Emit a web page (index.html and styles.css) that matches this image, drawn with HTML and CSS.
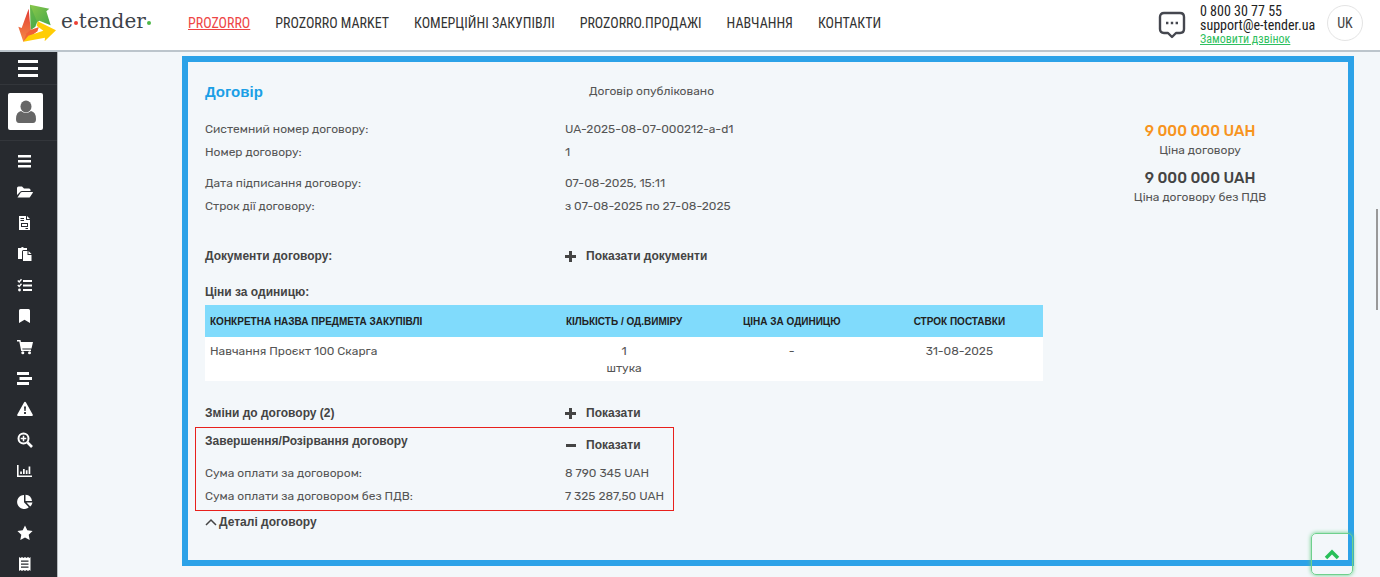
FILE: index.html
```html
<!DOCTYPE html>
<html lang="uk">
<head>
    <meta charset="UTF-8">
    <meta name="viewport" content="width=device-width, initial-scale=1.0">
    <title>e-tender</title>
    <link rel="stylesheet" href="styles.css">
</head>
<body>
    <header class="header">
        <a href="#" class="logo">
            <svg class="logo-mark" viewBox="54 12 114 114">
                <defs>
                    <linearGradient id="red" x1="0" y1="0" x2="0" y2="1"><stop offset="0" stop-color="#e23a35"/><stop offset="1" stop-color="#f58a45"/></linearGradient>
                    <linearGradient id="green" x1="0" y1="0" x2="1" y2="1"><stop offset="0" stop-color="#8cc84b"/><stop offset="1" stop-color="#3fa548"/></linearGradient>
                </defs>
                <path fill="url(#green)" d="m90 14 58 12-9 8 13 42-34-14-8 6-4 12-14 10z"/>
                <path fill="#2f9e49" d="m90 14 18 44 4 10-6 12-14 10z" opacity=".35"/>
                <path fill="url(#red)" d="m86 26 6 64 24-8-4 12-42 31-15-45 10 4z"/>
                <path fill="#f0562f" d="m92 90 24-8-4 12-42 31 10-25z" opacity=".6"/>
                <path fill="#ffcd05" d="m113 64 55 27-34 33 1-11-65 12 15-18 45-15-20-15z"/>
            </svg>
            <span class="logo-text">e<i class="dot dot-red"></i>tender<i class="dot dot-green"></i></span>
        </a>
        <nav class="nav">
            <a href="#" class="active">PROZORRO</a>
            <a href="#">PROZORRO MARKET</a>
            <a href="#">КОМЕРЦІЙНІ ЗАКУПІВЛІ</a>
            <a href="#">PROZORRO.ПРОДАЖІ</a>
            <a href="#">НАВЧАННЯ</a>
            <a href="#">КОНТАКТИ</a>
        </nav>
        <svg class="chat" viewBox="0 0 28 28" fill="none" stroke="#45474f" stroke-width="2.4" stroke-linejoin="round">
            <path d="M6 2h16q4 0 4 4v12q0 4-4 4h-4l-4 4-4-4H6q-4 0-4-4V6q0-4 4-4z"/>
            <path d="M8 12h2.400M12.800 12h2.400M17.600 12H20"/>
        </svg>
        <div class="contacts">
            <span>0 800 30 77 55</span>
            <span>support@e-tender.ua</span>
            <a href="#">Замовити дзвінок</a>
        </div>
        <button class="lang">UK</button>
    </header>

    <div class="page">
        <aside class="sidebar">
            <button class="menu-toggle" aria-label="Меню">
                <svg viewBox="0 0 20 18"><path d="M0 1h20v3H0zM0 8h20v3H0zM0 15h20v3H0z"/></svg>
            </button>
            <div class="user">
                <a href="#" class="avatar" aria-label="Профіль">
                    <svg viewBox="0 0 20 24"><ellipse cx="10" cy="6.500" rx="5.500" ry="6"/><path d="M5 11q5 4 10 0 5 1 5 8 0 4-3 4H3q-3 0-3-4 0-7 5-8z"/></svg>
                </a>
            </div>
            <nav class="side-nav">
                <a href="#" aria-label="Список"><svg viewBox="0 0 16 16"><path d="M1 2h13v2.500H1zM1 7h13v2.500H1zM1 12h13v2.500H1z"/></svg></a>
                <a href="#" aria-label="Папка"><svg viewBox="0 0 16 16"><path d="M0 11V4q0-1.500 1.500-1.500H5L7 4.500h5q1.500 0 1.500 1.500v1H5Q3.600 7 3 8z"/><path d="M.5 13.500 3.800 8.500Q4.200 8 5 8h10.500q.8 0 .3.800L13 13q-.4.500-1 .5z"/></svg></a>
                <a href="#" aria-label="Документ"><svg viewBox="0 0 16 16"><path fill-rule="evenodd" d="M2 1h7v4h4v10H2zM3.500 3v1H7V3zM3.500 5v1H7V5zM4 8v4h7V8zm1 1h5v2H5zM8.500 13v1H11v-1z"/><path d="m10 1 3 3h-3z"/></svg></a>
                <a href="#" aria-label="Копії"><svg viewBox="0 0 16 16"><path d="M1 2h3q1-2 3 0h3v2H6.500Q5 4 5 5.500V13H1z"/><path d="M6 5h4.500v4h4v6H6z"/><path d="m11.500 5 3 3h-3z"/></svg></a>
                <a href="#" aria-label="Завдання"><svg viewBox="0 0 16 16"><path d="M6 3h9v2H6zM6 7.500h9v2H6zM6 12h9v2H6z"/><path d="m.8 3.500 1.400 1.400L4.500 2.300M.8 8l1.400 1.400 2.300-2.600" fill="none" stroke="#fff" stroke-width="1.400"/><circle cx="2.500" cy="13" r="1.400"/></svg></a>
                <a href="#" aria-label="Закладка"><svg viewBox="0 0 16 16"><path d="M2 2.500Q2 1 3.500 1h8Q13 1 13 2.500V15l-5.500-3.300L2 15z"/></svg></a>
                <a href="#" aria-label="Кошик"><svg viewBox="0 0 16 16"><path d="M0 1h3.500l.4 2H16l-1.500 6.500H5.300l.2 1H14V12H4.200L2.300 2.500H0z"/><circle cx="5.800" cy="13.800" r="1.500"/><circle cx="12.500" cy="13.800" r="1.500"/></svg></a>
                <a href="#" aria-label="План"><svg viewBox="0 0 16 16"><path d="M0 2h12v3H0zM2.500 7H15v3H2.500zM0 12h12v3H0z"/></svg></a>
                <a href="#" aria-label="Попередження"><svg viewBox="0 0 16 16"><path fill-rule="evenodd" d="M8 .8q.6 0 1 .7l6.700 12q.6 1.500-1 1.500H1.300q-1.600 0-1-1.500L7 1.500Q7.400.8 8 .8zM7 5.500l.4 4.500h1.200L9 5.500zm.1 5.600v1.800h1.800v-1.800z"/></svg></a>
                <a href="#" aria-label="Пошук"><svg viewBox="0 0 16 16" fill="none" stroke="#fff"><circle cx="6.500" cy="6.500" r="5" stroke-width="2"/><path d="m10.500 10.500 4.500 4.500" stroke-width="2.600"/><path d="M3.700 6.500h5.600M6.500 3.700v5.600" stroke-width="1.500"/></svg></a>
                <a href="#" aria-label="Звіти"><svg viewBox="0 0 16 16"><path d="M0 2h1.600v10.400H15V14H0zM3.200 8.500h1.700V11H3.200zM6 6h1.700v5H6zM8.800 7.200h1.700V11H8.800zM11.600 3.500h1.700V11h-1.700z"/></svg></a>
                <a href="#" aria-label="Статистика"><svg viewBox="0 0 16 16"><path d="M7 1v7.200l4.800 5A7 7 0 1 1 7 1z"/><path d="M8.500.8A7 7 0 0 1 15 7H8.500z"/><path d="M9.500 8.500H15.500a7 7 0 0 1-2.300 4z"/></svg></a>
                <a href="#" aria-label="Обране"><svg viewBox="0 0 16 16"><path d="m8 .5 2.300 4.800 5.300.7-3.900 3.700 1 5.300L8 12.400 3.300 15l1-5.300L.4 6l5.300-.7z"/></svg></a>
                <a href="#" aria-label="Рахунки"><svg viewBox="0 0 16 16"><path fill-rule="evenodd" d="m2 1 1.500 1L5 1l1.500 1L8 1l1.500 1L11 1l1.500 1L13.500 1v14l-1-1-1.500 1-1.500-1L8 15l-1.500-1L5 15l-1.500-1L2 15zM4 4.500v1.200h7.500V4.500zm0 3v1.200h7.500V7.500zm0 3v1.200h7.500v-1.200z"/></svg></a>
            </nav>
        </aside>

        <main class="content">
            <section class="contract">
                <div class="details">
                    <div class="row title-row">
                        <h2>Договір</h2>
                        <span class="status">Договір опубліковано</span>
                    </div>
                    <div class="group">
                        <div class="row"><span>Системний номер договору:</span><span>UA-2025-08-07-000212-a-d1</span></div>
                        <div class="row"><span>Номер договору:</span><span>1</span></div>
                    </div>
                    <div class="group">
                        <div class="row"><span>Дата підписання договору:</span><span>07-08-2025, 15:11</span></div>
                        <div class="row"><span>Строк дії договору:</span><span>з 07-08-2025 по 27-08-2025</span></div>
                    </div>
                    <div class="row documents">
                        <h3>Документи договору:</h3>
                        <button class="toggle"><svg viewBox="0 0 12 12"><path d="M4 0h3v4h4v3H7v4H4V7H0V4h4z"/></svg>Показати документи</button>
                    </div>
                    <h3 class="table-title">Ціни за одиницю:</h3>
                    <table class="prices">
                        <thead>
                            <tr>
                                <th class="name">КОНКРЕТНА НАЗВА ПРЕДМЕТА ЗАКУПІВЛІ</th>
                                <th>КІЛЬКІСТЬ / ОД.ВИМІРУ</th>
                                <th>ЦІНА ЗА ОДИНИЦЮ</th>
                                <th>СТРОК ПОСТАВКИ</th>
                            </tr>
                        </thead>
                        <tbody>
                            <tr>
                                <td class="name">Навчання Проєкт 100 Скарга</td>
                                <td>1<br>штука</td>
                                <td>-</td>
                                <td>31-08-2025</td>
                            </tr>
                        </tbody>
                    </table>
                    <div class="row changes">
                        <h3>Зміни до договору (2)</h3>
                        <button class="toggle"><svg viewBox="0 0 12 12"><path d="M4 0h3v4h4v3H7v4H4V7H0V4h4z"/></svg>Показати</button>
                    </div>
                    <div class="completion">
                        <div class="row completion-head">
                            <h3>Завершення/Розірвання договору</h3>
                            <button class="toggle"><svg viewBox="0 0 12 12"><path d="M1 4h10v3H1z"/></svg>Показати</button>
                        </div>
                        <div class="row"><span>Сума оплати за договором:</span><span>8 790 345 UAH</span></div>
                        <div class="row"><span>Сума оплати за договором без ПДВ:</span><span>7 325 287,50 UAH</span></div>
                    </div>
                    <button class="more"><svg viewBox="0 0 12 12"><path d="m1 9 5-5 5 5" fill="none" stroke="#444" stroke-width="1.500"/></svg>Деталі договору</button>
                </div>
                <div class="sums">
                    <strong class="sum orange">9 000 000 UAH</strong>
                    <span>Ціна договору</span>
                    <strong class="sum">9 000 000 UAH</strong>
                    <span>Ціна договору без ПДВ</span>
                </div>
            </section>
        </main>
    </div>

    <button class="to-top" aria-label="Вгору">
        <svg viewBox="0 0 16 12"><path d="m2 10 6-6 6 6" fill="none" stroke="#28bf58" stroke-width="3.500"/></svg>
    </button>
    <div class="scroll-thumb"></div>
</body>
</html>
```
FILE: styles.css
```css
* {
    box-sizing: border-box;
}
body {
    margin: 0;
    height: 100vh;
    overflow: hidden;
    display: flex;
    flex-direction: column;
    background-color: #f3f7fa;
    color: #555;
    font-family: Rubik, Roboto, sans-serif;
    font-size: 12px;
}
a {
    color: inherit;
    text-decoration: none;
}
button {
    padding: 0;
    border: none;
    background: none;
    color: inherit;
    font: inherit;
    cursor: pointer;
}
h2, h3 {
    margin: 0;
}

/* Header */
.header {
    flex: none;
    display: flex;
    align-items: center;
    height: 52px;
    padding: 0 17px 4px 18px;
    background-color: #fff;
    border-bottom: 2px solid #bcc5cc;
    font-family: "Roboto Condensed", Roboto, sans-serif;
}
.logo {
    display: flex;
    align-items: center;
    gap: 5px;
    width: 170px;
}
.logo-mark {
    width: 38px;
    height: 38px;
}
.logo-text {
    display: flex;
    align-items: center;
    padding-bottom: 4px;
    color: #3d434a;
    font-family: "DejaVu Serif", serif;
    font-size: 20px;
    line-height: 28px;
}
.dot {
    width: 4px;
    height: 4px;
    margin: 4px 1px 0;
    border-radius: 50%;
}
.dot-red {
    background-color: #ee4036;
}
.dot-green {
    background-color: #4cb748;
}
.nav {
    flex: 1;
    display: flex;
    gap: 25px;
    color: #333;
    font-size: 14px;
    white-space: nowrap;
}
.nav .active {
    color: #ee4545;
    text-decoration: underline;
}
.chat {
    width: 28px;
    height: 28px;
    margin: 4px 14px 0 0;
}
.contacts {
    display: flex;
    flex-direction: column;
    width: 118px;
    padding-top: 4px;
    color: #222;
    font-size: 14px;
    line-height: 14px;
    white-space: nowrap;
}
.contacts a {
    color: #2fbf60;
    font-size: 12px;
    text-decoration: underline;
}
.lang {
    width: 36px;
    height: 36px;
    margin-left: 9px;
    border: 1px solid #e4e4e4;
    border-radius: 50%;
    color: #444;
    font-size: 14px;
}

/* Sidebar */
.page {
    flex: 1;
    display: flex;
    min-height: 0;
}
.sidebar {
    flex: none;
    width: 58px;
    background-color: #272a2f;
    border-right: 1px solid #b8bcc0;
    overflow: hidden;
}
.sidebar svg {
    fill: #fff;
}
.menu-toggle {
    display: flex;
    align-items: center;
    width: 100%;
    height: 33px;
    padding-left: 18px;
    border-bottom: 1px solid #33363b;
}
.menu-toggle svg {
    width: 20px;
    height: 18px;
}
.user {
    height: 56px;
    padding: 8px;
    border-bottom: 1px solid #33363b;
}
.user .avatar {
    display: flex;
    align-items: center;
    justify-content: center;
    width: 35px;
    height: 37px;
    background-color: #fff;
    border-radius: 2px;
}
.avatar svg {
    width: 20px;
    height: 24px;
    fill: #666;
}
.side-nav {
    padding-top: 4px;
}
.side-nav a {
    display: flex;
    align-items: center;
    height: 31px;
    padding-left: 17px;
}
.side-nav svg {
    width: 16px;
    height: 16px;
}
.side-nav svg[fill="none"] {
    fill: none;
}

/* Contract */
.content {
    flex: 1;
    padding: 4px 26px 11px 124px;
}
.contract {
    display: grid;
    grid-template-columns: 11fr 4fr;
    padding: 18px 0 27px 17px;
    border: 6px solid #2ca2e8;
}
.row {
    display: grid;
    grid-template-columns: 360px auto;
    line-height: 23px;
}
h2, h3, th, .toggle, .more {
    font-family: "Liberation Sans", Arial, sans-serif;
    font-weight: bold;
}
h3 {
    color: #444;
    font-size: 12px;
    line-height: 23px;
}
h2 {
    color: #1b9fe6;
    font-size: 15px;
}
.title-row {
    margin-bottom: 15px;
}
.status {
    padding-left: 24px;
}
.group {
    margin-bottom: 8px;
}
.toggle {
    display: flex;
    align-items: center;
    gap: 9px;
    height: 23px;
    color: #444;
}
.toggle svg {
    width: 12px;
    height: 12px;
    fill: #444;
}
.documents {
    margin: 27px 0 13px;
}
.table-title {
    margin-bottom: 1px;
}
.prices {
    width: 100%;
    table-layout: fixed;
    border-collapse: collapse;
    background-color: #fff;
    text-align: center;
}
.prices th {
    height: 32px;
    padding: 0;
    background-color: #80dbfc;
    color: #222;
    font-size: 10px;
}
.prices td {
    padding: 6px 0 4px;
    line-height: 17px;
    vertical-align: top;
}
.prices .name {
    width: 40%;
    padding-left: 5px;
    text-align: left;
}
.changes {
    margin: 21px 0 2px;
}
.completion {
    width: fit-content;
    margin-left: -10px;
    padding: 2px 9px;
    border: 1px solid #e8201c;
}
.completion-head {
    margin-bottom: 5px;
}
.completion-head .toggle {
    margin-top: 4px;
}
.more {
    display: flex;
    align-items: center;
    gap: 2px;
    color: #444;
    line-height: 22px;
}
.more svg {
    width: 12px;
    height: 12px;
}
.sums {
    display: flex;
    flex-direction: column;
    align-items: center;
    padding: 42px 0 0 9px;
    line-height: 19px;
}
.sum {
    color: #444;
    font-size: 15px;
    font-weight: 500;
}
.orange {
    color: #f7941e;
}
.orange + span {
    margin-bottom: 9px;
}

.to-top {
    position: fixed;
    right: 27px;
    bottom: 2px;
    display: flex;
    align-items: center;
    justify-content: center;
    width: 42px;
    height: 42px;
    border: 1px solid #6fd08d;
    border-radius: 5px;
    box-shadow: 0 0 4px #5fcb80;
}
.to-top svg {
    width: 16px;
    height: 12px;
}
.scroll-thumb {
    position: fixed;
    right: 2px;
    top: 209px;
    width: 2px;
    height: 101px;
    background-color: #999;
}
```
